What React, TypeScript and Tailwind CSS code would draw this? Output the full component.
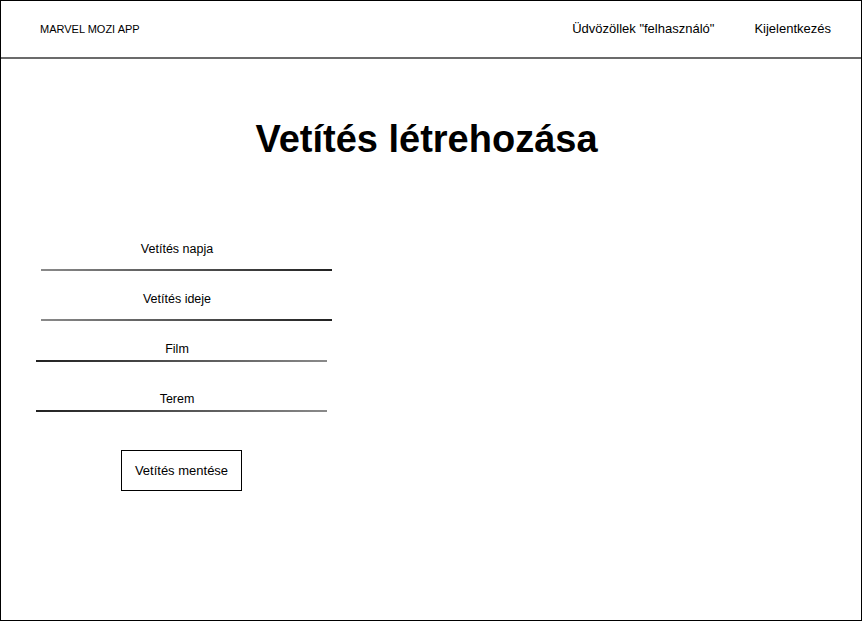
const Field = ({ label, line, gap, top }: { label: string; line: string; gap: string; top: string }) => (
  <div className={top}>
    <div className="ml-[31px] w-[290px] text-center text-[12.5px] leading-[14px] text-black">{label}</div>
    <div className={`${gap} ${line} w-[291px] h-[2px]`} />
  </div>
);

export default function App() {
  return (
    <div className="w-[862px] h-[621px] border border-black bg-white flex flex-col text-black" style={{ fontFamily: '"Liberation Sans", Arial, sans-serif' }}>
      {/* Header */}
      <header className="h-[58px] shrink-0 border-b-2 border-[#6b6b6b] flex items-center">
        <span className="ml-[39px] mt-px text-[11px]">MARVEL MOZI APP</span>
        <div className="ml-auto mr-[30px] flex items-center gap-[40px] text-[13px]">
          <span>Üdvözöllek "felhasználó"</span>
          <span>Kijelentkezés</span>
        </div>
      </header>

      <h1 className="mt-[61px] pr-[9px] text-center text-[38px] leading-[38px] font-bold">Vetítés létrehozása</h1>

      <div className="mt-[84px]">
        <Field label="Vetítés napja" top="" gap="mt-[13px]" line="ml-[40px] bg-gradient-to-r from-[#8a8a8a] to-[#222]" />
        <Field label="Vetítés ideje" top="mt-[21px]" gap="mt-[13px]" line="ml-[40px] bg-gradient-to-r from-[#8a8a8a] to-[#222]" />
        <Field label="Film" top="mt-[21px]" gap="mt-[4px]" line="ml-[35px] bg-gradient-to-r from-[#222] to-[#8a8a8a]" />
        <Field label="Terem" top="mt-[30px]" gap="mt-[4px]" line="ml-[35px] bg-gradient-to-r from-[#222] to-[#8a8a8a]" />

        <button className="mt-[38px] ml-[120px] w-[121px] h-[41px] border border-black bg-white text-[13px] flex items-center justify-center">
          Vetítés mentése
        </button>
      </div>
    </div>
  );
}
